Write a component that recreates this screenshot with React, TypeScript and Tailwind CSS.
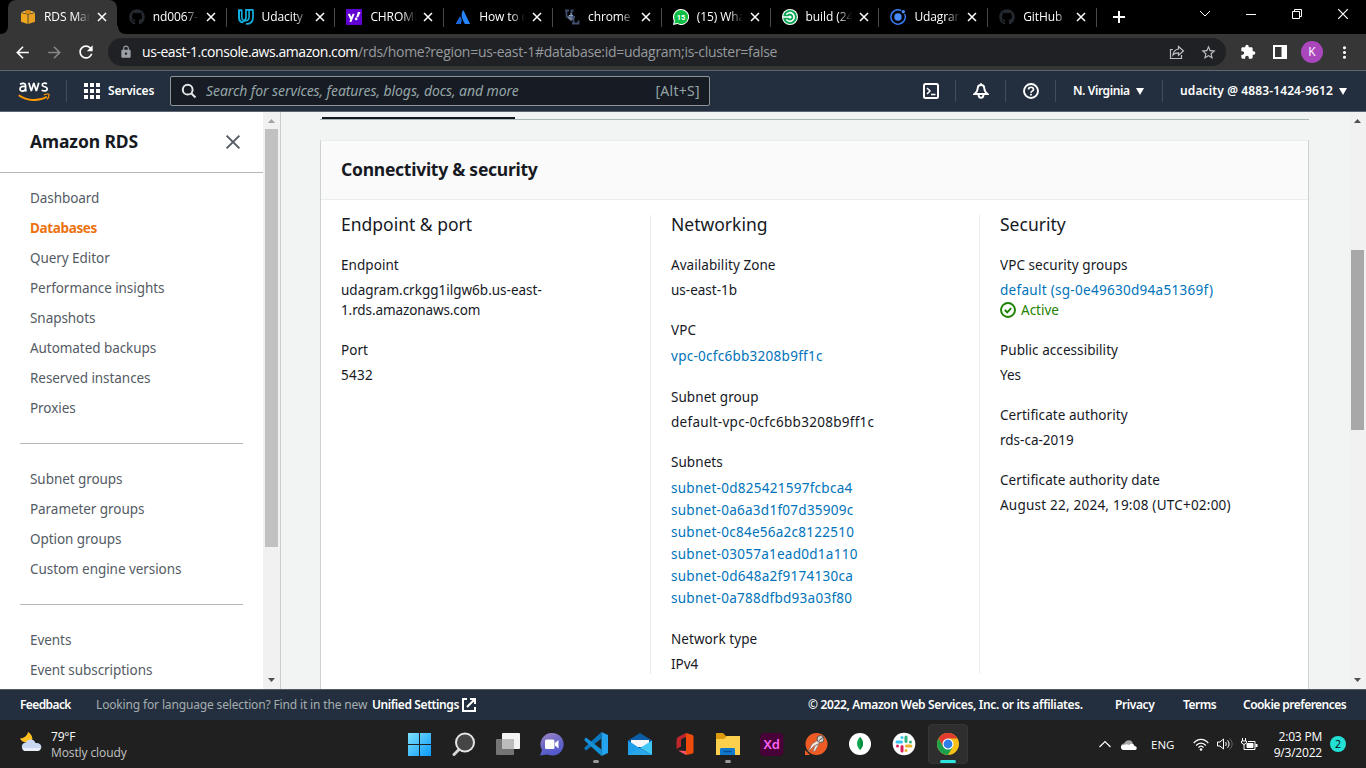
import type { ReactNode } from "react";
import { MdArrowBack, MdArrowForward, MdRefresh, MdLock, MdExtension, MdMoreVert, MdStarBorder } from "react-icons/md";
import { FaGithub } from "react-icons/fa";

/* ---------- Browser tab favicons ---------- */

const BoxIcon = () => (
  <svg viewBox="0 0 16 16" className="size-4">
    <path d="M1 3.200 8 1l7 2.200-7 1.600z" fill="#f7c35c" />
    <path d="M1 4 7.600 5.400V15L1 12.800z" fill="#f0a91f" />
    <path d="M15 4 8.400 5.400V15L15 12.800z" fill="#e8a020" />
    <path d="M5 2 8 1l3 1v2.200L8 5 5 4.200z" fill="#d98c10" />
  </svg>
);

const UdacityIcon = () => (
  <svg viewBox="0 0 16 16" className="size-4" fill="none" stroke="#12b0e0" strokeWidth="2">
    <path d="M3.800 1.200H1v7c0 3 1.600 5 4.300 5" />
    <path d="M3.800.8v6.700c0 3 1.800 4.300 3.700 4.300 2.400 0 3.600-1.500 3.600-4V.8" strokeWidth="1.600" />
    <path d="M15 .800H8v7.500c0 2-1 3.500-2.700 4.500M15 .500v8c0 4-2.500 6.500-7.200 6.500" strokeWidth="1.700" />
  </svg>
);

const YahooIcon = () => (
  <svg viewBox="0 0 16 16" className="size-4">
    <rect width="16" height="16" fill="#6001d2" />
    <path d="M2.800 4.800 5 9.700M7.700 4.800 4.300 12.800" stroke="#fff" strokeWidth="2" fill="none" />
    <path d="M10.200 8.200 11.900 3h2.600l-2.200 5.200z" fill="#fff" />
    <circle cx="10.200" cy="9.900" r="1.300" fill="#fff" />
  </svg>
);

const AtlassianIcon = () => (
  <svg viewBox="0 0 16 16" className="size-4">
    <path d="M5 7.300c2 2 2.200 4.600.9 7.700H1.200c-.3 0-.5-.3-.3-.6z" fill="#1868db" />
    <path d="M7.800 1.400c.1-.3.5-.3.7 0l6.400 13c.1.3 0 .6-.4.6H9.900C7 9.500 5.500 6 7.800 1.400z" fill="#2684ff" />
  </svg>
);

const UlIcon = () => (
  <svg viewBox="0 0 16 16" className="size-4" fill="none">
    <path d="M1 1.500h4M2.500 1.500v5c0 3 5 3 5 0v-5M6.500 1.500h3" stroke="#3c4c6c" strokeWidth="1.800" />
    <path d="M5 6.500h4v3.500H5zM7 4v8" stroke="#93a5c2" strokeWidth="1" />
    <path d="M8 8h3M9.500 8v6.500M8 14.500h6.500v-3" stroke="#40506e" strokeWidth="1.800" />
  </svg>
);

const WhatsIcon = () => (
  <svg viewBox="0 0 16 16" className="size-4">
    <path d="M8 0a8 8 0 1 1-3.600 15.100L0 16l.9-4.200A8 8 0 0 1 8 0z" fill="#fff" />
    <path d="M8 1a7 7 0 1 1-3.500 13L1.400 14.600 2 11.500A7 7 0 0 1 8 1z" fill="#0dbf42" />
    <text x="8" y="10.700" fontSize="7.500" fontWeight="700" textAnchor="middle" fill="#fff" fontFamily="Roboto, sans-serif">15</text>
  </svg>
);

const CircleIcon = () => (
  <svg viewBox="0 0 16 16" className="size-4" fill="none">
    <circle cx="8" cy="8" r="8" fill="#fff" />
    <circle cx="8" cy="8" r="6.900" fill="#04a653" />
    <path d="M4.300 5.600a4.300 4.300 0 1 1 0 4.800" stroke="#fff" strokeWidth="1.700" />
    <path d="M1 8h7" stroke="#fff" strokeWidth="1.500" />
    <circle cx="8" cy="8" r="1.600" fill="#fff" />
  </svg>
);

const IonicIcon = () => (
  <svg viewBox="0 0 16 16" className="size-4" fill="none">
    <path d="M11.200 1.500A7.200 7.200 0 1 0 14.600 5" stroke="#3880ff" strokeWidth="1.400" />
    <circle cx="8" cy="8" r="3.700" fill="#4a8bff" />
    <circle cx="13.300" cy="2.800" r="1.700" fill="#4a8bff" />
  </svg>
);

const Cross = ({ className }: { className: string }) => (
  <svg viewBox="0 0 10 10" className={className} fill="none" stroke="currentColor">
    <path d="m1 1 8 8m0-8-8 8" />
  </svg>
);

const tabs: { title: string; icon: ReactNode }[] = [
  { title: "RDS Mana", icon: <BoxIcon /> },
  { title: "nd0067-c", icon: <FaGithub className="size-4 text-[#24292f]" /> },
  { title: "Udacity", icon: <UdacityIcon /> },
  { title: "CHROME", icon: <YahooIcon /> },
  { title: "How to c", icon: <AtlassianIcon /> },
  { title: "chrome -", icon: <UlIcon /> },
  { title: "(15) Wha", icon: <WhatsIcon /> },
  { title: "build (24", icon: <CircleIcon /> },
  { title: "Udagram", icon: <IonicIcon /> },
  { title: "GitHub", icon: <FaGithub className="size-4 text-[#24292f]" /> },
];

function TabStrip() {
  return (
    <div className="flex h-[34px] bg-black pl-2 text-white">
      {tabs.map((t, i) => (
        <div
          key={t.title}
          className={
            i === 0
              ? "relative flex w-[108.800px] shrink-0 items-center rounded-t-lg bg-[#363636] pl-3"
              : "relative flex w-[108.800px] shrink-0 items-center pl-3"
          }
        >
          {i === 0 && (
            <svg viewBox="0 0 126 8" className="absolute -left-2 bottom-0 h-2 w-[126px]" fill="#363636">
              <path d="M0 8c5 0 8-3 8-8v8zM126 8c-5 0-8-3-8-8v8zM8 0h110v8H8z" />
            </svg>
          )}
          <span className="relative">{t.icon}</span>
          <span className="relative ml-2 w-[46px] overflow-hidden whitespace-nowrap text-xs tracking-[-0.1px] [mask-image:linear-gradient(to_right,#000_70%,transparent_100%)]">
            {t.title}
          </span>
          <Cross className="relative ml-[7px] size-[10px] stroke-[1.5]" />
          {i > 0 && <span className="absolute right-[-1px] top-2 h-[19px] w-px bg-[#4a4a4a]" />}
        </div>
      ))}
      <div className="flex flex-1 items-center pl-[17px]">
        <svg viewBox="0 0 12 12" className="size-3" stroke="#fff" strokeWidth="2">
          <path d="M6 0v12M0 6h12" />
        </svg>
      </div>
      <div className="flex w-[167px] items-start gap-[34px] pt-[8px]">
        <svg viewBox="0 0 12 12" className="size-3" fill="none" stroke="#fff">
          <path d="m1 3 5 5 5-5" />
        </svg>
        <svg viewBox="0 0 12 12" className="size-3" stroke="#fff">
          <path d="M1 6.500h10" />
        </svg>
        <svg viewBox="0 0 12 12" className="size-3" fill="none" stroke="#fff">
          <path d="M3.500 3.500v-2h7v7h-2M1.500 3.500h7v7h-7z" />
        </svg>
        <Cross className="size-3" />
      </div>
    </div>
  );
}

function Toolbar() {
  return (
    <div className="flex h-9 items-center bg-[#363636] pl-[13px] text-white">
      <MdArrowBack className="size-[19px]" />
      <MdArrowForward className="ml-[13px] size-[19px] text-[#878787]" />
      <MdRefresh className="ml-[12px] size-5" />
      <div className="ml-3 flex h-7 w-[1118px] items-center rounded-full bg-[#202124] pl-[11px] text-sm">
        <MdLock className="size-[14px] text-[#9aa0a6]" />
        <div className="ml-[9px] flex-1 whitespace-nowrap text-[#969a9f]">
          <span className="tracking-[-0.44px] text-white">us-east-1.console.aws.amazon.com</span>
          <span className="tracking-[-0.285px]">/rds/home?region=us-east-1#database:id=udagram;is-cluster=false</span>
        </div>
        <svg viewBox="0 0 16 16" className="size-4" fill="none" stroke="#bdc1c6" strokeWidth="1.200">
          <path d="M4 5.500H1.500v9h11V11" />
          <path d="M9.500 2.500 14.500 7l-5 4.300V8.800C7 8.800 5.200 9.500 4 11c.4-3 2-5.500 5.500-6z" />
        </svg>
        <MdStarBorder className="ml-[15px] mr-[9px] size-[17px] text-[#bdc1c6]" />
      </div>
      <MdExtension className="ml-[14px] size-4" />
      <svg viewBox="0 0 14 14" className="ml-[17px] h-[14px] w-[14px]">
        <path d="M0 0h14v14H0zM2 2v10h6.500V2z" fill="#fff" fillRule="evenodd" />
      </svg>
      <div className="ml-[14px] flex size-[22px] items-center justify-center rounded-full bg-[#ab47bc] text-xs">K</div>
      <MdMoreVert className="ml-[12px] size-[19px]" />
    </div>
  );
}

/* ---------- AWS console header ---------- */

const Divider = () => <span className="h-[22px] w-px bg-[#414d5c]" />;

const Caret = ({ className }: { className: string }) => (
  <svg viewBox="0 0 8 7" className={className} fill="currentColor">
    <path d="M0 0h8L4 7z" />
  </svg>
);

const AwsLogo = () => (
  <svg viewBox="0 0 32 21" className="h-[21px] w-8" fill="none">
    <g stroke="#fff" strokeWidth="1.700">
      <path d="M2 3.200c2.500-1.400 5.600-1.300 5.600 1.400v3.900c0 1 .3 1.500.7 2M7.600 5.600C4.600 5 2 5.600 2 7.900c0 3.100 5 2.900 5.600-.6" />
      <path d="m10.800 1.700 2.500 8.400 2.500-8 2.500 8 2.500-8.400" strokeLinejoin="bevel" />
      <path d="M29 2.700c-2-1-4.800-.7-4.800 1.200 0 2.500 5 1.300 5 4 0 2.400-3.500 2.500-5.500 1.200" />
    </g>
    <path d="M.7 14.300c8.500 5.800 20 6.300 28.300 1.500" stroke="#ff9900" strokeWidth="1.900" />
    <path d="M25.800 14c2-1 4-1.100 5-.7.400 1-.2 3.300-1.800 5" stroke="#ff9900" strokeWidth="1.200" />
  </svg>
);

function ConsoleHeader() {
  return (
    <header className="flex h-[42px] items-center border-y border-[#5c6570] bg-[#232f3e] pl-[18px] text-xs font-semibold text-white">
      <AwsLogo />
      <span className="ml-4 flex">
        <Divider />
      </span>
      <span className="ml-[17px] grid grid-cols-3 gap-[2px]">
        {Array.from({ length: 9 }, (_, i) => (
          <span key={i} className="size-1 bg-white" />
        ))}
      </span>
      <span className="ml-2 w-[62px] tracking-[-0.2px]">Services</span>
      <div className="flex h-[30px] w-[540px] items-center rounded-[2px] border border-[#8d9599] bg-[#161b24] px-[9px] text-sm font-normal text-[#95a5a6]">
        <svg viewBox="0 0 16 16" className="ml-px size-4" fill="none" stroke="#e4e8e8" strokeWidth="2">
          <circle cx="6.700" cy="6.700" r="4.900" />
          <path d="m10.200 10.200 4.300 4.300" />
        </svg>
        <span className="ml-[9px] flex-1 italic tracking-[-0.08px]">Search for services, features, blogs, docs, and more</span>
        <span className="tracking-[0.3px]">[Alt+S]</span>
      </div>
      <div className="ml-auto flex items-center">
        <svg viewBox="0 0 16 16" className="mr-4 size-4" fill="none" stroke="#fff" strokeWidth="2">
          <rect x="1" y="1" width="14" height="14" rx="1.500" />
          <path d="m4 5 3 3-3 3M8 11.500h4.500" strokeWidth="1.500" />
        </svg>
        <Divider />
        <svg viewBox="0 0 16 16" className="ml-[17px] mr-4 size-4" fill="none" stroke="#fff" strokeWidth="1.900">
          <path d="M8 2c2.600 0 3.300 1.600 3.300 3.300 0 2.300 1 4 3.200 5.700h-13c2.200-1.700 3.200-3.400 3.200-5.700C4.700 3.600 5.400 2 8 2zM8 .3v1.500M5.500 11.500c0 4.300 5 4.300 5 0" />
        </svg>
        <Divider />
        <svg viewBox="0 0 16 16" className="ml-[17px] mr-4 size-4" fill="none" stroke="#fff" strokeWidth="1.900">
          <circle cx="8" cy="8" r="7" />
          <path d="M5.500 6.600C5.500 3.500 10.500 3.500 10.500 6.400 10.500 8.200 8 8 8 9.700M8 10.800v1.800" strokeWidth="1.700" />
        </svg>
        <Divider />
        <span className="ml-[17px] w-[63px] whitespace-nowrap text-xs tracking-[-0.4px]">N. Virginia</span>
        <Caret className="mr-[18px] h-[7px] w-2" />
        <Divider />
        <span className="ml-[17px] w-[159px] whitespace-nowrap text-xs tracking-[0.12px]">udacity @ 4883-1424-9612</span>
        <Caret className="mr-[19px] h-[7px] w-2" />
      </div>
    </header>
  );
}

/* ---------- Side navigation ---------- */

const navGroups = [
  ["Dashboard", "Databases", "Query Editor", "Performance insights", "Snapshots", "Automated backups", "Reserved instances", "Proxies"],
  ["Subnet groups", "Parameter groups", "Option groups", "Custom engine versions"],
  ["Events", "Event subscriptions"],
];

const Arrow = ({ className }: { className: string }) => (
  <svg viewBox="0 0 7 4" className={className} fill="currentColor">
    <path d="M3.500 0 7 4H0z" />
  </svg>
);

function SideNav() {
  return (
    <aside className="flex w-[281px] shrink-0 border-r border-[#c8cccc] bg-white">
      <div className="w-[263px]">
        <div className="flex h-[61px] items-center justify-between border-b border-[#b8b8b8] pl-[30px] pr-[22px]">
          <h2 className="-mt-[2px] text-[17.500px] font-bold tracking-[-0.1px] text-[#16191f]">Amazon RDS</h2>
          <Cross className="-mt-px size-4 stroke-[1.2] text-[#545b64]" />
        </div>
        <div className="pt-[10px] text-[13.500px]">
          {navGroups.map((group, g) => (
            <div key={group[0]}>
              {g > 0 && <div className="mx-5 mb-5 mt-5 h-px bg-[#b8b8b8]" />}
              {group.map((item) => (
                <a
                  key={item}
                  className={
                    item === "Databases"
                      ? "block h-[30px] pl-[30px] leading-[30px] font-bold tracking-[-0.35px] text-[#ec7211]"
                      : "block h-[30px] pl-[30px] leading-[30px] tracking-[-0.06px] text-[#545b64]"
                  }
                >
                  {item}
                </a>
              ))}
            </div>
          ))}
        </div>
      </div>
      <div className="flex w-[17px] flex-col items-center bg-[#f1f1f1] pb-[7px] pt-[7px]">
        <Arrow className="h-1 w-[7px] text-[#a3a3a3]" />
        <div className="mt-[6px] h-[418px] w-[13px] bg-[#c1c1c1]" />
        <Arrow className="mt-auto h-1 w-[7px] rotate-180 text-[#505050]" />
      </div>
    </aside>
  );
}

/* ---------- Main panel ---------- */

function Field({ label, children }: { label: string; children: ReactNode }) {
  return (
    <div className="mb-5">
      <div className="mb-[5px] tracking-[0.06px]">{label}</div>
      {children}
    </div>
  );
}

const Link = ({ children }: { children: ReactNode }) => (
  <a className="block leading-[22px] tracking-[0.27px] text-[#0073bb]">{children}</a>
);

const subnets = [
  "subnet-0d825421597fcbca4",
  "subnet-0a6a3d1f07d35909c",
  "subnet-0c84e56a2c8122510",
  "subnet-03057a1ead0d1a110",
  "subnet-0d648a2f9174130ca",
  "subnet-0a788dfbd93a03f80",
];

function Column({ title, className, children }: { title: string; className: string; children: ReactNode }) {
  return (
    <div className={className}>
      <h3 className="-mt-px mb-[21px] text-[17.500px] leading-5">{title}</h3>
      {children}
    </div>
  );
}

function Main() {
  return (
    <main className="flex min-w-0 flex-1 bg-[#f2f3f3] text-[#16191f]">
      <div className="ml-[39px] flex w-[989px] flex-col">
        <div className="h-2 border-b border-[#aab7b8]">
          <div className="ml-[2px] mt-[5px] h-[2px] w-[193px] bg-[#16191f]" />
        </div>
        <section className="mt-5 flex-1 border-x border-t border-[#ccd1d1] border-t-[#eaeded] bg-white">
          <div className="flex h-[59px] items-center border-b border-[#eaeded] bg-[#fafafa] pl-5">
            <h2 className="-mt-[2px] text-[17.500px] font-bold tracking-[-0.26px]">Connectivity &amp; security</h2>
          </div>
          <div className="mt-[15px] flex h-[459px] text-[13.500px] leading-5">
            <Column title="Endpoint & port" className="w-[330px] border-r border-[#eaeded] pl-5">
              <Field label="Endpoint">
                udagram.crkgg1ilgw6b.us-east-
                <br />
                <span className="tracking-[-0.1px]">1.rds.amazonaws.com</span>
              </Field>
              <Field label="Port">
                <span className="tracking-[0.27px]">5432</span>
              </Field>
            </Column>
            <Column title="Networking" className="w-[329px] border-r border-[#eaeded] pl-5">
              <Field label="Availability Zone">us-east-1b</Field>
              <Field label="VPC">
                <Link>vpc-0cfc6bb3208b9ff1c</Link>
              </Field>
              <Field label="Subnet group">
                <span className="tracking-[0.28px]">default-vpc-0cfc6bb3208b9ff1c</span>
              </Field>
              <Field label="Subnets">
                {subnets.map((s) => (
                  <Link key={s}>{s}</Link>
                ))}
              </Field>
              <Field label="Network type">IPv4</Field>
            </Column>
            <Column title="Security" className="flex-1 pl-5">
              <Field label="VPC security groups">
                <a className="block tracking-[0.29px] text-[#0073bb]">default (sg-0e49630d94a51369f)</a>
                <span className="flex items-center gap-[5px] text-[#1d8102]">
                  <svg viewBox="0 0 16 16" className="size-4" fill="none" stroke="currentColor" strokeWidth="1.900">
                    <circle cx="8" cy="8" r="7" />
                    <path d="m4.800 8 2.400 2.300 4-4.200" />
                  </svg>
                  Active
                </span>
              </Field>
              <Field label="Public accessibility">Yes</Field>
              <Field label="Certificate authority">rds-ca-2019</Field>
              <Field label="Certificate authority date">
                <span className="tracking-[0.23px]">August 22, 2024, 19:08 (UTC+02:00)</span>
              </Field>
            </Column>
          </div>
        </section>
      </div>
      <div className="ml-auto flex w-[17px] flex-col items-center bg-[#f1f1f1] py-[7px]">
        <Arrow className="h-1 w-[7px] text-[#505050]" />
        <div className="mt-[127px] h-[180px] w-[13px] bg-[#a8a8a8]" />
        <Arrow className="mt-auto h-1 w-[7px] rotate-180 text-[#505050]" />
      </div>
    </main>
  );
}

function ConsoleFooter() {
  return (
    <footer className="flex h-[31px] items-center whitespace-nowrap border-t border-[#545b64] bg-[#232f3e] px-5 text-xs font-semibold text-white">
      <span className="w-[76px] tracking-[-0.6px]">Feedback</span>
      <span className="w-[276px] font-normal tracking-[-0.15px] text-[#a5adb0]">Looking for language selection? Find it in the new</span>
      <span className="w-[90px] tracking-[-0.4px]">Unified Settings</span>
      <svg viewBox="0 0 14 14" className="size-[14px]" fill="none" stroke="#fff" strokeWidth="2">
        <path d="M5 1H1v12h12V9M8 1h5v5M13 1 5 9" />
      </svg>
      <span className="ml-auto w-[307px] tracking-[-0.34px]">© 2022, Amazon Web Services, Inc. or its affiliates.</span>
      <span className="w-[68px] tracking-[-0.4px]">Privacy</span>
      <span className="w-[60px] tracking-[-0.5px]">Terms</span>
      <span className="w-[103px] tracking-[-0.53px]">Cookie preferences</span>
    </footer>
  );
}

/* ---------- Windows taskbar ---------- */

const taskIcons: { name: string; mark?: "idle" | "active"; art: ReactNode }[] = [
  {
    name: "start",
    art: (
      <>
        <defs>
          <linearGradient id="win" x1="0" y1="0" x2="1" y2="1">
            <stop offset="0" stopColor="#7fe0fc" />
            <stop offset="1" stopColor="#0a9bfb" />
          </linearGradient>
        </defs>
        <path d="M0 1h11v11H0zM12 1h11v11H12zM0 13h11v11H0zM12 13h11v11H12z" fill="url(#win)" />
      </>
    ),
  },
  {
    name: "search",
    art: (
      <>
        <path d="m7.500 17-5.500 5.500" stroke="#d5d5d5" strokeWidth="3" strokeLinecap="round" />
        <circle cx="13" cy="10.500" r="9" fill="#454545" stroke="#e4e4e4" strokeWidth="2" />
      </>
    ),
  },
  {
    name: "task view",
    art: (
      <>
        <rect x="6" y="1" width="18" height="16" rx="1" fill="#f3f3f3" />
        <rect x="0" y="7" width="18" height="16" rx="1" fill="#757575" />
        <path d="M6 7h12v10H6z" fill="#bcbcbc" />
      </>
    ),
  },
  {
    name: "chat",
    art: (
      <>
        <defs>
          <linearGradient id="chat" x1="0.200" y1="0" x2="0.600" y2="1">
            <stop offset="0" stopColor="#9a80c4" />
            <stop offset="0.600" stopColor="#6264c7" />
            <stop offset="1" stopColor="#5058cf" />
          </linearGradient>
        </defs>
        <path d="M12 1a11.300 11.300 0 1 1-4.500 21.500L0 23.500l2-5.500A11.300 11.300 0 0 1 12 1z" fill="url(#chat)" />
        <rect x="5" y="7.500" width="9.500" height="9.500" rx="1.500" fill="#fff" />
        <path d="m15 11 3.500-3v8.500L15 13.500z" fill="#fff" />
      </>
    ),
  },
  {
    name: "code",
    mark: "idle",
    art: (
      <>
        <path d="M17.500 0 24 3v18l-6.500 3z" fill="#24a3ee" />
        <path d="M17.500 6.500 2 18.500.5 17v-1.500L17.500 0z" fill="#0b78bd" />
        <path d="M17.500 17.500 2 5.500.5 7v1.500L17.500 24z" fill="#1591d8" />
      </>
    ),
  },
  {
    name: "mail",
    art: (
      <>
        <path d="M0 8.500 12 1l12 7.500-12 8z" fill="#0d5ca8" />
        <path d="M3 8h18v7H3z" fill="#f4f6f8" />
        <path d="M0 8.500 16 19l8 4H0z" fill="#1f9eea" />
        <path d="m24 8.500-12 7.500 12 7z" fill="#42c8f5" />
        <path d="m0 23 12-7 12 7z" fill="#2aa6ea" />
      </>
    ),
  },
  {
    name: "office",
    art: (
      <>
        <path d="m14 1-7 3.500C5 5.500 4.500 6.500 4.500 8.500V17L9 14.500V8.500c0-1 .5-1.500 1.500-2L14 5z" fill="#c0272d" />
        <path d="m14 1 6 1.700c1 .3 1.500 1 1.500 2v15c0 1-.5 1.700-1.500 2L14 23z" fill="#ee4a0c" />
        <path d="m6 18.500 8 .5v4z" fill="#ff5262" />
      </>
    ),
  },
  {
    name: "files",
    mark: "idle",
    art: (
      <>
        <path d="M0 2c0-1 .5-1 1-1h6l3 3h13v4H0z" fill="#dc9b0c" />
        <path d="M0 7h8l3-3h13v19H0z" fill="#fccf4c" />
        <path d="M4 23v-5.500c0-1 .7-1.500 1.500-1.500h12c1 0 1.500.7 1.500 1.500V23z" fill="#0f78cf" />
        <path d="M7.500 19.500h8" stroke="#0b4f91" strokeWidth="1.500" />
      </>
    ),
  },
  {
    name: "xd",
    art: (
      <>
        <rect x="0" y="1" width="23.500" height="23" rx="4.500" fill="#470137" />
        <text x="11.800" y="17" fontSize="13" fontWeight="600" textAnchor="middle" fill="#ff61f6" fontFamily="Noto Sans, sans-serif">Xd</text>
      </>
    ),
  },
  {
    name: "postman",
    art: (
      <>
        <circle cx="12.500" cy="12" r="11" fill="#ef5b25" />
        <path d="M1 18v5h5z" fill="#ef5b25" />
        <path d="m4 20 4-8 6-4 2 3-6 3z" fill="#fbe5dc" stroke="#666" strokeWidth=".6" />
        <path d="m11 14 4-2-4 7-2 .5z" fill="#eee" stroke="#666" strokeWidth=".5" />
        <circle cx="16.500" cy="7" r="3.500" fill="#d8d4d0" stroke="#575350" />
        <path d="m15 8.500 4-3" stroke="#555" />
      </>
    ),
  },
  {
    name: "mongodb",
    art: (
      <>
        <circle cx="12" cy="12" r="11" fill="#fff" />
        <path d="M12 5c4 4 4 9 0 13-4-4-4-9 0-13z" fill="#13aa52" />
        <path d="M12 5c4 4 4 9 0 13z" fill="#098d43" />
      </>
    ),
  },
  {
    name: "slack",
    art: (
      <>
        <circle cx="12" cy="12" r="11.300" fill="#fff" />
        <g strokeWidth="3" strokeLinecap="round">
          <path d="M10 5.500h0M5 10h4.500" stroke="#36c5f0" />
          <path d="M14 5v4.500M18.500 10h0" stroke="#2eb67d" />
          <path d="M14.500 14H19M14 18.500h0" stroke="#ecb22e" />
          <path d="M10 14.500V19M5.500 14h0" stroke="#e01e5a" />
        </g>
      </>
    ),
  },
  {
    name: "chrome",
    mark: "active",
    art: (
      <>
        <circle cx="12" cy="12" r="11" fill="#fbc116" />
        <path d="M2.500 6.500A11 11 0 0 1 21.500 6.500H12L7.200 14.800z" fill="#e33b2e" />
        <path d="M2.500 6.500A11 11 0 0 0 12 23l4.800-8.300H7.300z" fill="#1da04e" />
        <circle cx="12" cy="12" r="5.500" fill="#fff" />
        <circle cx="12" cy="12" r="4.400" fill="#2f7de9" />
      </>
    ),
  },
];

function Taskbar() {
  return (
    <div className="flex h-12 bg-[#202020] text-xs text-white">
      <div className="flex w-[397px] items-center pl-5">
        <svg viewBox="0 0 22 20" className="-mt-1 h-5 w-[22px]">
          <path d="M8 0c-.5 3-3 6-8 6.500C1.500 11 9 12 12.500 7 12 3 10 1 8 0z" fill="#ffbf1f" />
          <path d="M6 19a4.200 4.200 0 0 1 0-8.400C7 7 14 6 15.500 11c7-.8 8 7.500 1.500 8z" fill="#c8d8f2" />
          <path d="M5 19c-1.500 0-2.800-1.500-2.500-3h18c.5 1.500-1 3-3 3z" fill="#e9eef8" />
        </svg>
        <div className="ml-[9px] mt-[2px] leading-4 tracking-[-0.2px]">
          <div>79°F</div>
          <div className="text-[#c3c3c3] tracking-[-0.1px]">Mostly cloudy</div>
        </div>
      </div>
      <div className="flex">
        {taskIcons.map((t) => (
          <div key={t.name} className="flex w-11 items-center justify-center">
            <div
              className={
                t.mark === "active"
                  ? "relative ml-[2px] flex size-10 items-center justify-center rounded border border-[#353535] bg-[#2e2e2e]"
                  : "relative ml-[2px] flex size-10 items-center justify-center"
              }
            >
              <svg viewBox="0 0 24 24" className="size-6">{t.art}</svg>
              {t.mark === "idle" && <span className="absolute bottom-[1px] left-[17px] h-[3px] w-[6px] rounded-full bg-[#9a9a9a]" />}
              {t.mark === "active" && <span className="absolute bottom-0 left-[11px] h-[3px] w-4 rounded-full bg-[#2ce5dc]" />}
            </div>
          </div>
        ))}
      </div>
      <div className="ml-auto flex items-center pr-5">
        <svg viewBox="0 0 12 8" className="h-2 w-3" fill="none" stroke="#fff" strokeWidth="1.200">
          <path d="m.5 7 5.500-5.500L11.500 7" />
        </svg>
        <svg viewBox="0 0 17 11" className="ml-[9px] h-[11px] w-[17px]">
          <path d="M4 10C0 9 0 5 4 4.500 6 0 12 0 13 4.500z" fill="#a9a9a9" />
          <path d="M3 11c-3-1-3-5 1-5 2-1 3-1 5 0 2-2 5-1.500 5.500 1 3 .5 3 4 0 4z" fill="#fff" />
        </svg>
        <span className="ml-[14px] mt-[2px] w-[42px] text-[11.500px]">ENG</span>
        <svg viewBox="0 0 16 13" className="h-[13px] w-4" fill="none" stroke="#fff" strokeWidth="1.300">
          <path d="M.7 5.200c4-5 10.600-5 14.600 0M3.200 7.500c2.600-3.300 7-3.300 9.600 0M5.500 9.700c1.500-2 3.500-2 5 0" />
          <circle cx="8" cy="11.500" r="1.300" fill="#fff" stroke="none" />
        </svg>
        <svg viewBox="0 0 16 12" className="ml-2 h-3 w-4" fill="none" stroke="#fff">
          <path d="M.5 4v4h2.500l3.500 3V1L3 4zM8.500 4c1 1 1 3 0 4M10.500 2.300c2 2 2 5.400 0 7.400" />
          <path d="M12.500.5c3.500 3 3.500 8 0 11" stroke="#666" />
        </svg>
        <svg viewBox="0 0 17 13" className="ml-2 h-[13px] w-[17px]" fill="none" stroke="#fff">
          <path d="M1.500 0v3M4.500 0v3M.5 3h5v2L3 6.500.5 5zM3 6v5.500h11v-8H7" />
          <path d="M6 5.500h6v4H6z" fill="#fff" />
          <path d="M15.500 6v3" strokeWidth="2" />
        </svg>
        <div className="ml-[9px] mt-[2px] w-[55px] whitespace-nowrap text-right leading-4 tracking-[-0.2px]">
          <div>2:03 PM</div>
          <div>9/3/2022</div>
        </div>
        <span className="ml-2 flex size-4 items-center justify-center rounded-full bg-[#23e0d5] text-[10.500px] text-black">2</span>
      </div>
    </div>
  );
}

export default function App() {
  return (
    <div className="flex h-[768px] w-[1366px] flex-col overflow-hidden font-['Noto_Sans',sans-serif]">
      <div className="font-['Open_Sans',sans-serif]">
        <TabStrip />
        <Toolbar />
      </div>
      <ConsoleHeader />
      <div className="flex h-[577px] overflow-hidden">
        <SideNav />
        <Main />
      </div>
      <ConsoleFooter />
      <div className="font-['Open_Sans',sans-serif]">
        <Taskbar />
      </div>
    </div>
  );
}
